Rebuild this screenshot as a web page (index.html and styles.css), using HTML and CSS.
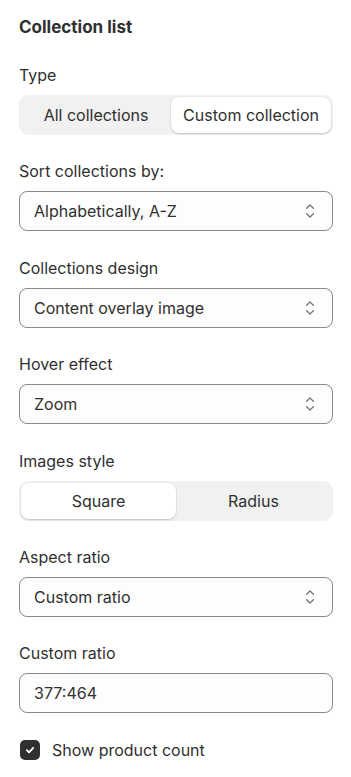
FILE: index.html
```html
<!DOCTYPE html>
<html>
<head>
<meta charset="utf-8">
<link rel="stylesheet" href="styles.css">
</head>
<body>
<div class="panel">
  <h2 class="title">Collection list</h2>

  <div class="field">
    <div class="label">Type</div>
    <div class="seg">
      <div class="seg-btn">All collections</div>
      <div class="seg-btn active">Custom collection</div>
    </div>
  </div>

  <div class="field">
    <div class="label">Sort collections by:</div>
    <div class="select"><span>Alphabetically, A-Z</span>
      <svg class="chev" width="12" height="18" viewBox="0 0 12 18"><path d="M2.7 6.2 6 2.9 9.3 6.2M2.7 11.8 6 15.1 9.3 11.8" fill="none" stroke="#6e6e6e" stroke-width="1.3" stroke-linecap="round" stroke-linejoin="round"/></svg>
    </div>
  </div>

  <div class="field">
    <div class="label">Collections design</div>
    <div class="select"><span>Content overlay image</span>
      <svg class="chev" width="12" height="18" viewBox="0 0 12 18"><path d="M2.7 6.2 6 2.9 9.3 6.2M2.7 11.8 6 15.1 9.3 11.8" fill="none" stroke="#6e6e6e" stroke-width="1.3" stroke-linecap="round" stroke-linejoin="round"/></svg>
    </div>
  </div>

  <div class="field">
    <div class="label">Hover effect</div>
    <div class="select"><span>Zoom</span>
      <svg class="chev" width="12" height="18" viewBox="0 0 12 18"><path d="M2.7 6.2 6 2.9 9.3 6.2M2.7 11.8 6 15.1 9.3 11.8" fill="none" stroke="#6e6e6e" stroke-width="1.3" stroke-linecap="round" stroke-linejoin="round"/></svg>
    </div>
  </div>

  <div class="field">
    <div class="label">Images style</div>
    <div class="seg">
      <div class="seg-btn active">Square</div>
      <div class="seg-btn">Radius</div>
    </div>
  </div>

  <div class="field">
    <div class="label">Aspect ratio</div>
    <div class="select"><span>Custom ratio</span>
      <svg class="chev" width="12" height="18" viewBox="0 0 12 18"><path d="M2.7 6.2 6 2.9 9.3 6.2M2.7 11.8 6 15.1 9.3 11.8" fill="none" stroke="#6e6e6e" stroke-width="1.3" stroke-linecap="round" stroke-linejoin="round"/></svg>
    </div>
  </div>

  <div class="field">
    <div class="label">Custom ratio</div>
    <div class="select"><span>377:464</span></div>
  </div>

  <div class="check">
    <span class="box"><svg width="12" height="12" viewBox="0 0 12 12"><path d="M2.8 6.2 5 8.3 9.2 3.8" fill="none" stroke="#fff" stroke-width="1.8" stroke-linecap="round" stroke-linejoin="round"/></svg></span>
    <span>Show product count</span>
  </div>
</div>
</body>
</html>
```

FILE: styles.css
```css
* { box-sizing: border-box; }
html, body { margin: 0; padding: 0; background: #ffffff; }
body {
  font-family: Inter, "Noto Sans", sans-serif;
  color: #303030;
  font-size: 16px;
  line-height: 20px;
}
.panel {
  padding: 16px 19px 0 19px;
  display: flex;
  flex-direction: column;
}
.title {
  margin: 0;
  font-size: 17px;
  font-weight: 700;
  line-height: 22px;
  color: #303030;
}
.field {
  display: flex;
  flex-direction: column;
  gap: 10px;
}
.title + .field { margin-top: 27px; }
.field + .field, .field + .check { margin-top: 26.4px; }
.label { color: #303030; }
.seg {
  display: flex;
  background: #f1f1f1;
  border-radius: 9px;
  padding: 2px;
  height: 40px;
  margin-right: -1px;
}
.seg-btn {
  flex: 1 1 0;
  display: flex;
  align-items: center;
  justify-content: center;
  padding: 0 12px;
  white-space: nowrap;
  border-radius: 8px;
  color: #303030;
}
.seg-btn.active {
  background: #ffffff;
  box-shadow: 0 1px 2px rgba(0,0,0,0.18), 0 0 0 0.5px rgba(0,0,0,0.04);
}
.select {
  height: 40px;
  border: 1px solid #8a8a8a;
  border-radius: 8px;
  background: #fdfdfd;
  display: flex;
  align-items: center;
  justify-content: space-between;
  padding: 0 14px 0 14px;
  margin-right: -1px;
}
.chev { display: block; margin-right: 2px; }
.check {
  display: flex;
  align-items: center;
  gap: 12px;
  padding-left: 1px;
}
.box {
  width: 20px;
  height: 20px;
  border-radius: 5px;
  background: #303030;
  display: flex;
  align-items: center;
  justify-content: center;
}
```
